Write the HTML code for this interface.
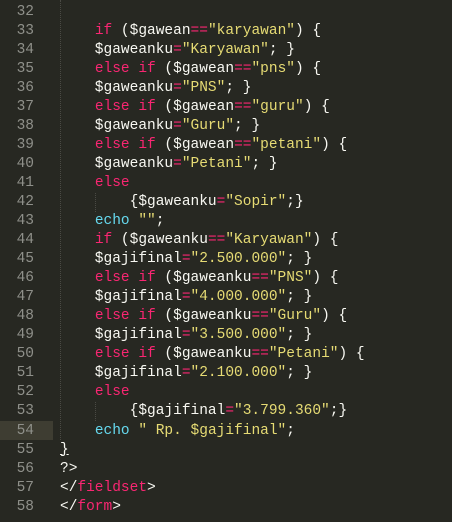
<!DOCTYPE html>
<html><head><meta charset="utf-8"><style>
html,body{margin:0;padding:0;background:#272822;width:452px;height:522px;overflow:hidden}
.hl{position:absolute;left:0;width:53px;height:19px;background:#3e3d32}
pre{margin:0;position:absolute;font-family:"Liberation Mono",monospace;font-size:14.5px;line-height:19.04px}
#n{left:0;top:2.5px;width:34px;text-align:right;color:#8f908a}
#c{left:60px;top:2.5px;color:#f8f8f2}
.k{color:#f92672}.s{color:#e6db74}.e{color:#66d9ef}
.gd{position:absolute;top:0;width:0;border-left:1px dotted #4a4a44;}
</style></head><body>
<div class="hl" style="top:421px"></div>
<div class="gd" style="left:60px;height:440px"></div>
<div class="gd" style="left:95px;top:193px;height:19px"></div>
<div class="gd" style="left:95px;top:402px;height:19px"></div>
<pre id="n">32
33
34
35
36
37
38
39
40
41
42
43
44
45
46
47
48
49
50
51
52
53
54
55
56
57
58</pre>
<pre id="c">

    <span class="k">if</span> ($gawean<span class="k">==</span><span class="s">"karyawan"</span>) {
    $gaweanku<span class="k">=</span><span class="s">"Karyawan"</span>; }
    <span class="k">else if</span> ($gawean<span class="k">==</span><span class="s">"pns"</span>) {
    $gaweanku<span class="k">=</span><span class="s">"PNS"</span>; }
    <span class="k">else if</span> ($gawean<span class="k">==</span><span class="s">"guru"</span>) {
    $gaweanku<span class="k">=</span><span class="s">"Guru"</span>; }
    <span class="k">else if</span> ($gawean<span class="k">==</span><span class="s">"petani"</span>) {
    $gaweanku<span class="k">=</span><span class="s">"Petani"</span>; }
    <span class="k">else</span>
        {$gaweanku<span class="k">=</span><span class="s">"Sopir"</span>;}
    <span class="e">echo</span> <span class="s">""</span>;
    <span class="k">if</span> ($gaweanku<span class="k">==</span><span class="s">"Karyawan"</span>) {
    $gajifinal<span class="k">=</span><span class="s">"2.500.000"</span>; }
    <span class="k">else if</span> ($gaweanku<span class="k">==</span><span class="s">"PNS"</span>) {
    $gajifinal<span class="k">=</span><span class="s">"4.000.000"</span>; }
    <span class="k">else if</span> ($gaweanku<span class="k">==</span><span class="s">"Guru"</span>) {
    $gajifinal<span class="k">=</span><span class="s">"3.500.000"</span>; }
    <span class="k">else if</span> ($gaweanku<span class="k">==</span><span class="s">"Petani"</span>) {
    $gajifinal<span class="k">=</span><span class="s">"2.100.000"</span>; }
    <span class="k">else</span>
        {$gajifinal<span class="k">=</span><span class="s">"3.799.360"</span>;}
    <span class="e">echo</span> <span class="s">" Rp. $gajifinal"</span>;
<u>}</u>
?&gt;
&lt;/<span class="k">fieldset</span>&gt;
&lt;/<span class="k">form</span>&gt;</pre>
</body></html>
